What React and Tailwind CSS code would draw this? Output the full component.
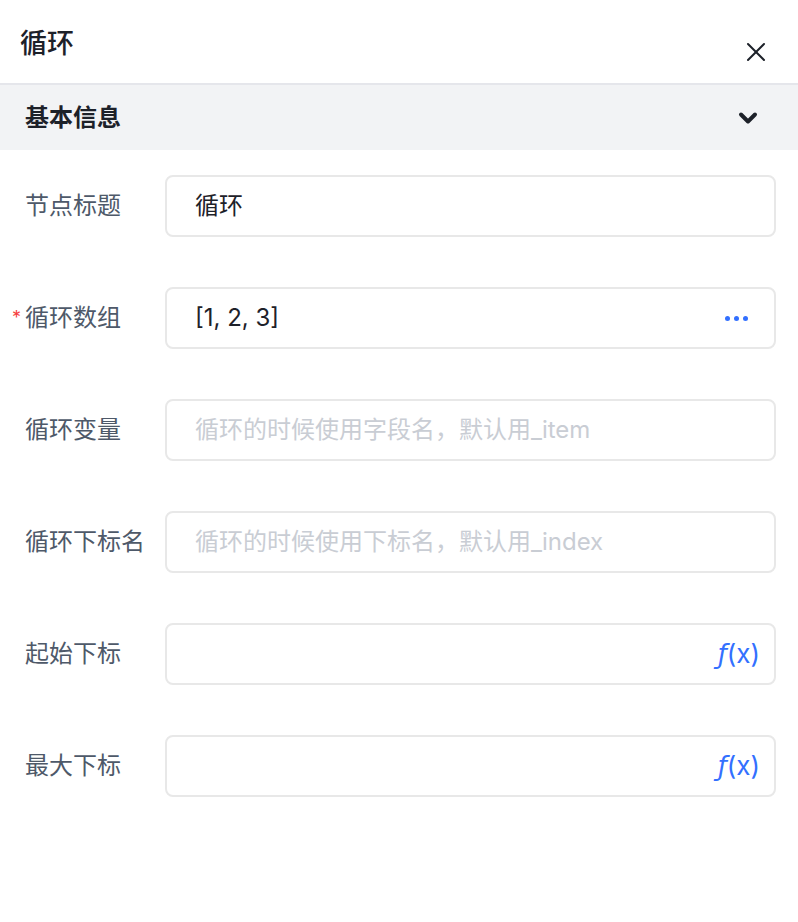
import { X, ChevronDown } from 'lucide-react';

const fields = [
    { label: '节点标题', value: '循环' },
    { label: '循环数组', value: '[1, 2, 3]', required: true, suffix: 'dots' },
    { label: '循环变量', placeholder: '循环的时候使用字段名，默认用_item' },
    { label: '循环下标名', placeholder: '循环的时候使用下标名，默认用_index' },
    { label: '起始下标', suffix: 'fx' },
    { label: '最大下标', suffix: 'fx' },
];

function Suffix({ type }) {
    if (type === 'dots') {
        return (
            <div className="flex items-center gap-[4px] mr-[2px]">
                <span className="w-[5px] h-[5px] rounded-full bg-[#3370ff]"></span>
                <span className="w-[5px] h-[5px] rounded-full bg-[#3370ff]"></span>
                <span className="w-[5px] h-[5px] rounded-full bg-[#3370ff]"></span>
            </div>
        );
    }
    if (type === 'fx') {
        return (
            <span className="text-[26px] leading-none text-[#3370ff] -mr-[10px] font-['Inter',sans-serif]">
                <span className="italic font-['DejaVu_Sans',sans-serif]">ƒ</span>(x)
            </span>
        );
    }
    return null;
}

export default function App() {
    return (
        <div className="w-[798px] h-[922px] bg-white font-['Inter','Noto_Sans_CJK_SC',sans-serif]">
            <div className="h-[85px] flex items-start justify-between border-b-2 border-[#e5e6eb]">
                <h1 className="text-[27px] leading-none font-medium text-[#1d2129] pl-[20px] pt-[30px]">循环</h1>
                <button className="mr-[26px] mt-[36px] text-[#1d2129]">
                    <X size={32} strokeWidth={1.5} />
                </button>
            </div>
            <div className="h-[65px] bg-[#f2f3f5] flex items-center justify-between pl-[25px] pr-[36px]">
                <span className="text-[24px] font-bold text-[#1d2129]">基本信息</span>
                <ChevronDown size={28} strokeWidth={3.4} className="text-[#1d2129]" />
            </div>
            <div className="flex flex-col gap-[50px] pt-[25px] pr-[22px]">
                {fields.map((f) => (
                    <div key={f.label} className="flex items-center h-[62px]">
                        <label className="w-[165px] shrink-0 text-[24px] text-[#4e5969] pl-[25px] relative">
                            {f.required && (
                                <span className="absolute left-[12px] top-[4px] text-[#f53f3f] text-[18px]">*</span>
                            )}
                            {f.label}
                        </label>
                        <div className="flex-1 h-[62px] rounded-[8px] border-2 border-[#e8e8e8] flex items-center justify-between pl-[28px] pr-[24px]">
                            {f.value ? (
                                <span className="text-[24px] text-[#1d2129]">{f.value}</span>
                            ) : (
                                <span className="text-[24px] text-[#c9cdd4]">{f.placeholder || ''}</span>
                            )}
                            <Suffix type={f.suffix} />
                        </div>
                    </div>
                ))}
            </div>
        </div>
    );
}
